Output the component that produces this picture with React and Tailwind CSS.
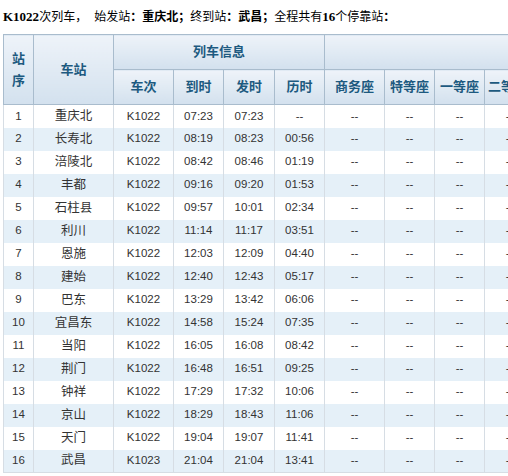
import React from "react";

const rows = [
  ["1", "重庆北", "K1022", "07:23", "07:23", "--"],
  ["2", "长寿北", "K1022", "08:19", "08:23", "00:56"],
  ["3", "涪陵北", "K1022", "08:42", "08:46", "01:19"],
  ["4", "丰都", "K1022", "09:16", "09:20", "01:53"],
  ["5", "石柱县", "K1022", "09:57", "10:01", "02:34"],
  ["6", "利川", "K1022", "11:14", "11:17", "03:51"],
  ["7", "恩施", "K1022", "12:03", "12:09", "04:40"],
  ["8", "建始", "K1022", "12:40", "12:43", "05:17"],
  ["9", "巴东", "K1022", "13:29", "13:42", "06:06"],
  ["10", "宜昌东", "K1022", "14:58", "15:24", "07:35"],
  ["11", "当阳", "K1022", "16:05", "16:08", "08:42"],
  ["12", "荆门", "K1022", "16:48", "16:51", "09:25"],
  ["13", "钟祥", "K1022", "17:29", "17:32", "10:06"],
  ["14", "京山", "K1022", "18:29", "18:43", "11:06"],
  ["15", "天门", "K1022", "19:04", "19:07", "11:41"],
  ["16", "武昌", "K1023", "21:04", "21:04", "13:41"],
];

const th =
  "border border-[#a9bccd] bg-gradient-to-b from-[#eef3f9] to-[#d3e1ee] text-[13px] font-bold text-[#1d5a80] text-center align-middle p-0";
const td = "border-x border-[#d6dde4] text-center align-middle p-0 h-[23px]";

export default function App() {
  return (
    <div
      className="w-[508px] h-[476px] overflow-hidden bg-white text-black"
      style={{ fontFamily: '"Liberation Sans", "Noto Sans CJK SC", sans-serif' }}
    >
      <div className="h-[34px] flex items-center pl-[3px] text-[12px] whitespace-nowrap">
        <b className="text-[13px]" style={{ fontFamily: '"Liberation Serif", serif' }}>K1022</b>
        <span>次列车，</span>
        <span className="ml-[7px]">始发站</span>
        <b>：重庆北；</b>
        <span>终到站</span>
        <b>：武昌；</b>
        <span>全程共有</span>
        <b className="text-[13px]" style={{ fontFamily: '"Liberation Serif", serif' }}>16</b>
        <span>个停靠站</span>
        <b>：</b>
      </div>
      <table className="table-fixed border-collapse ml-[3px] w-[531px] border-t border-[#b8c4cf]">
        <colgroup>
          <col className="w-[30px]" />
          <col className="w-[80px]" />
          <col className="w-[60px]" />
          <col className="w-[50px]" />
          <col className="w-[51px]" />
          <col className="w-[50px]" />
          <col className="w-[60px]" />
          <col className="w-[50px]" />
          <col className="w-[50px]" />
          <col className="w-[50px]" />
        </colgroup>
        <thead>
          <tr className="h-[35px]">
            <th rowSpan={2} className={th + " leading-[22px]"}>
              站<br />序
            </th>
            <th rowSpan={2} className={th}>车站</th>
            <th colSpan={4} className={th}>列车信息</th>
            <th colSpan={4} className={th}></th>
          </tr>
          <tr className="h-[35px]">
            <th className={th}>车次</th>
            <th className={th}>到时</th>
            <th className={th}>发时</th>
            <th className={th}>历时</th>
            <th className={th}>商务座</th>
            <th className={th}>特等座</th>
            <th className={th}>一等座</th>
            <th className={th + " whitespace-nowrap overflow-hidden text-left pl-[3px]"}>二等座</th>
          </tr>
        </thead>
        <tbody className="text-[11.5px] text-[#333]">
          {rows.map((r, i) => (
            <tr
              key={r[0]}
              className={
                (i % 2 === 1 ? "bg-[#e5f0f8]" : "bg-white") +
                (i === rows.length - 1 ? " border-b border-[#d6dde4]" : "")
              }
            >
              <td className={td}>{r[0]}</td>
              <td className={td + " text-[12.5px]"}>{r[1]}</td>
              <td className={td}>{r[2]}</td>
              <td className={td}>{r[3]}</td>
              <td className={td}>{r[4]}</td>
              <td className={td}>{r[5]}</td>
              <td className={td}>--</td>
              <td className={td}>--</td>
              <td className={td}>--</td>
              <td className={td}>--</td>
            </tr>
          ))}
        </tbody>
      </table>
    </div>
  );
}
